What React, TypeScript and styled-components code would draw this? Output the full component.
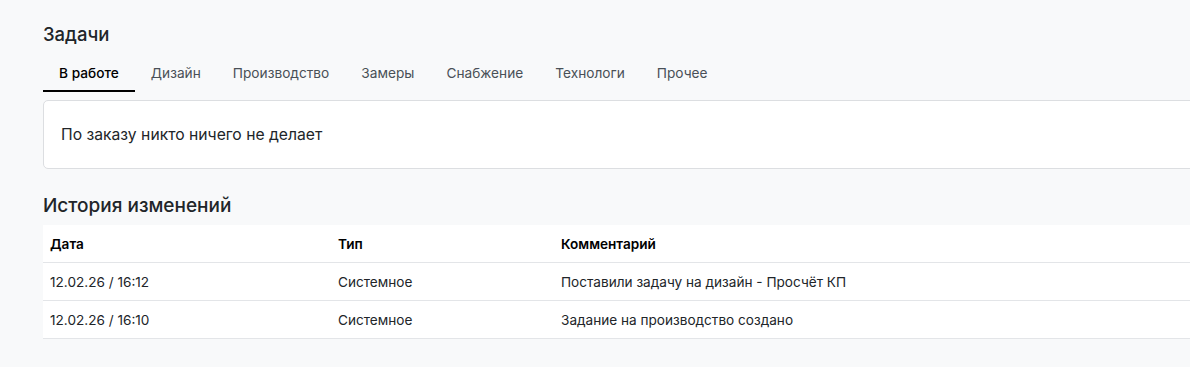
import React from 'react'
import styled, { createGlobalStyle } from 'styled-components'

const GlobalStyle = createGlobalStyle`
  html, body {
    margin: 0;
    padding: 0;
    background: #f8f9fa;
    overflow: hidden;
  }
  body {
    font-family: Inter, "Noto Sans", sans-serif;
    color: #212529;
  }
`

const Page = styled.div`
  width: 1170px;
  padding: 22px 0 0 43px;
`

const Title = styled.h2`
  margin: 0;
  font-size: 18.5px;
  font-weight: 500;
  line-height: 24px;
  color: #212529;
`

const TabBar = styled.div`
  display: flex;
  margin-top: 10px;
`

const Tab = styled.div<{ $active?: boolean }>`
  box-sizing: border-box;
  height: 36px;
  padding: 0 16px;
  display: flex;
  align-items: center;
  font-size: 13.7px;
  font-weight: ${({ $active }) => ($active ? 500 : 400)};
  color: ${({ $active }) => ($active ? '#000' : '#495057')};
  border-bottom: 2px solid ${({ $active }) => ($active ? '#000' : 'transparent')};
`

const Card = styled.div`
  margin-top: 8px;
  height: 69px;
  box-sizing: border-box;
  background: #fff;
  border: 1px solid #dcdee1;
  border-radius: 5px;
  display: flex;
  align-items: center;
  padding-left: 17px;
  font-size: 15.7px;
  color: #212529;
`

const SectionTitle = styled(Title)`
  margin-top: 25px;
  font-size: 19px;
`

const Table = styled.table`
  margin-top: 7px;
  width: 100%;
  border-collapse: collapse;
  background: #fff;
  font-size: 13.6px;
`

const Th = styled.th<{ $w?: number }>`
  text-align: left;
  font-weight: 600;
  color: #000;
  height: 37px;
  padding: 0 7px;
  width: ${({ $w }) => ($w ? `${$w}px` : 'auto')};
  border-bottom: 1px solid #e3e5e8;
`

const Td = styled.td`
  height: 37px;
  padding: 0 7px;
  color: #212529;
  border-bottom: 1px solid #e3e5e8;
`

const rows = [
  { date: '12.02.26 / 16:12', type: 'Системное', comment: 'Поставили задачу на дизайн - Просчёт КП' },
  { date: '12.02.26 / 16:10', type: 'Системное', comment: 'Задание на производство создано' },
]

const tabs = ['В работе', 'Дизайн', 'Производство', 'Замеры', 'Снабжение', 'Технологи', 'Прочее']

export default function App() {
  return (
    <>
      <GlobalStyle />
      <Page>
        <Title>Задачи</Title>
        <TabBar>
          {tabs.map((t, i) => (
            <Tab key={t} $active={i === 0}>{t}</Tab>
          ))}
        </TabBar>
        <Card>По заказу никто ничего не делает</Card>

        <SectionTitle>История изменений</SectionTitle>
        <Table>
          <thead>
            <tr>
              <Th $w={274}>Дата</Th>
              <Th $w={209}>Тип</Th>
              <Th>Комментарий</Th>
            </tr>
          </thead>
          <tbody>
            {rows.map((r) => (
              <tr key={r.date}>
                <Td>{r.date}</Td>
                <Td>{r.type}</Td>
                <Td>{r.comment}</Td>
              </tr>
            ))}
          </tbody>
        </Table>
      </Page>
    </>
  )
}
